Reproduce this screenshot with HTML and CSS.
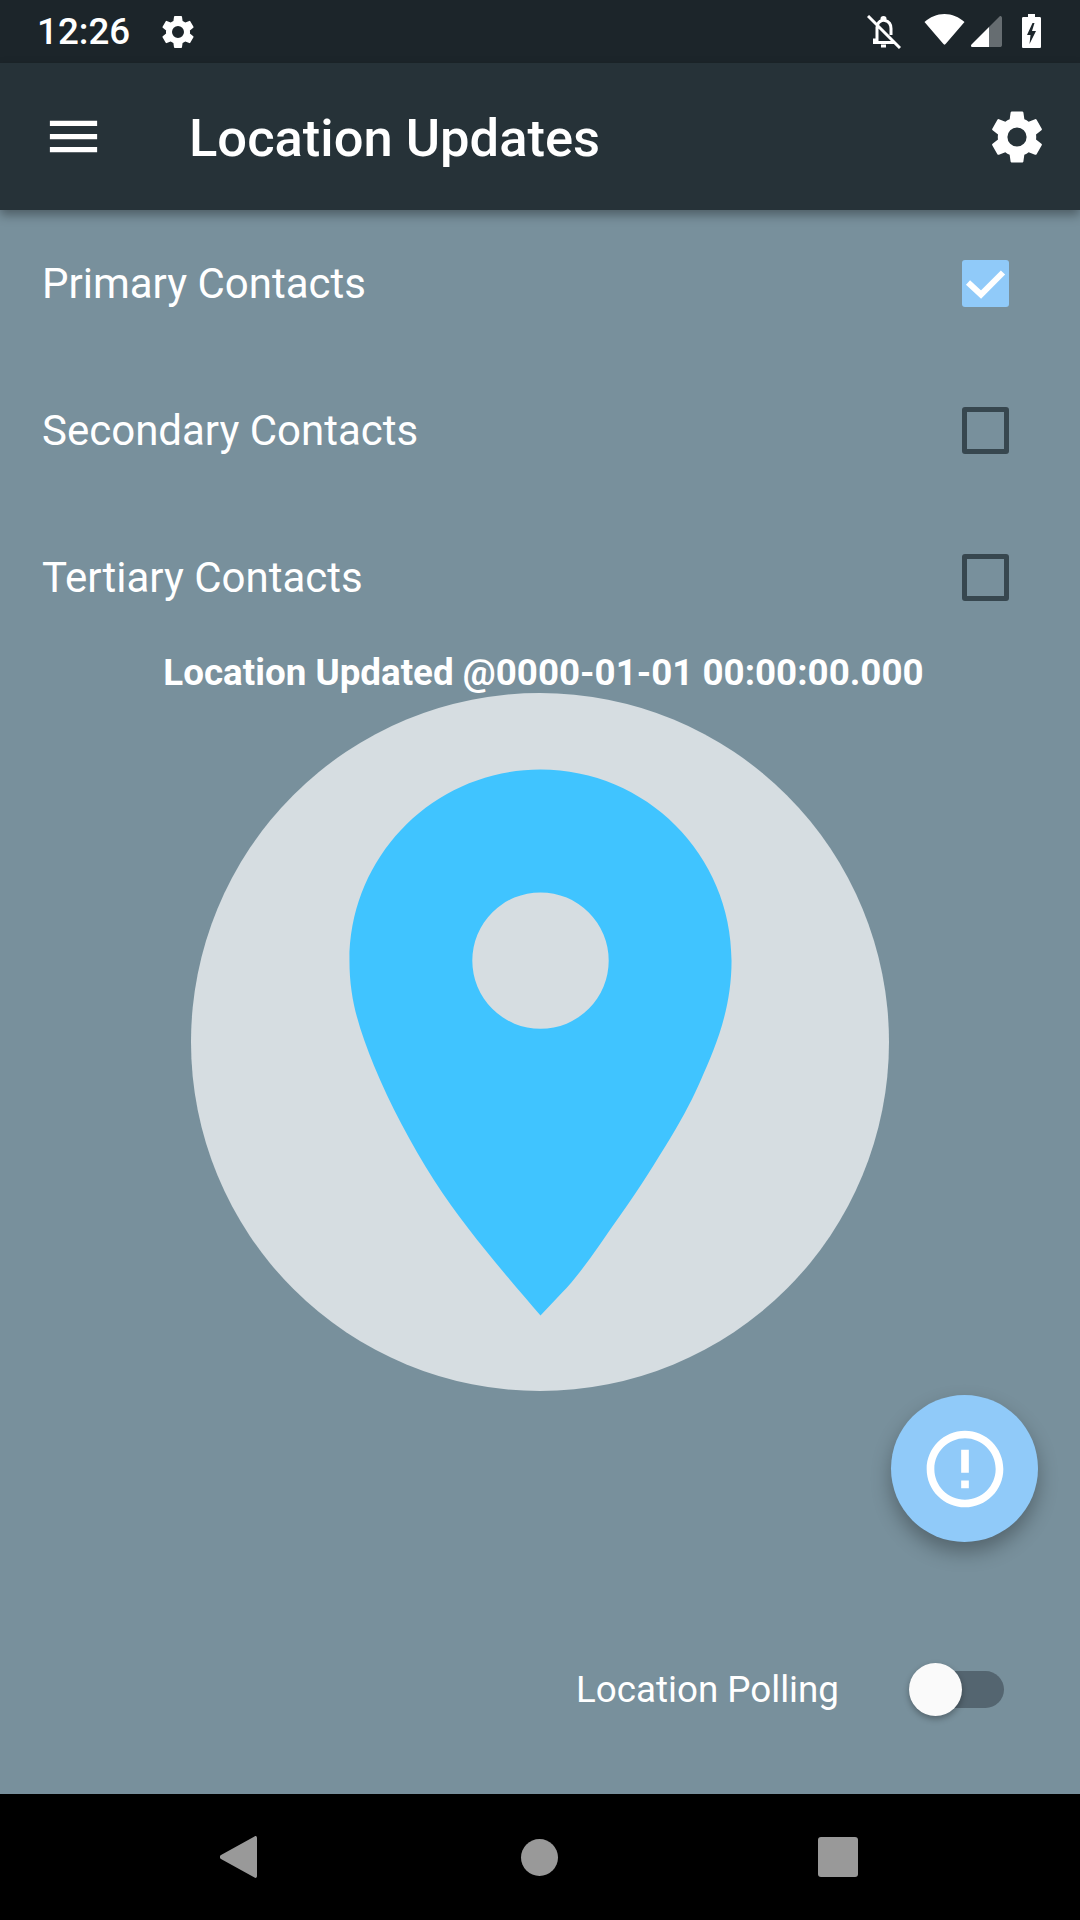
FILE: index.html
```html
<!DOCTYPE html>
<html lang="en">
<head>
  <meta charset="UTF-8">
  <title>Location Updates</title>
  <link rel="stylesheet" href="styles.css">
</head>
<body>
  <div class="status-bar">
    <span class="clock">12:26</span>
    <svg class="status-gear" viewBox="0 0 24 24"><path d="M19.14 12.94c.04-.3.06-.61.06-.94 0-.32-.02-.64-.07-.94l2.03-1.58a.49.49 0 0 0 .12-.61l-1.92-3.32a.49.49 0 0 0-.59-.22l-2.39.96c-.5-.38-1.03-.7-1.62-.94l-.36-2.54a.48.48 0 0 0-.48-.41h-3.84a.48.48 0 0 0-.47.41l-.36 2.54c-.59.24-1.13.57-1.62.94l-2.39-.96a.49.49 0 0 0-.59.22L2.74 8.87a.48.48 0 0 0 .12.61l2.03 1.58c-.05.3-.09.63-.09.94s.02.64.07.94l-2.03 1.58a.49.49 0 0 0-.12.61l1.92 3.32c.12.22.37.29.59.22l2.39-.96c.5.38 1.03.7 1.62.94l.36 2.54c.05.24.24.41.48.41h3.84c.24 0 .44-.17.47-.41l.36-2.54c.59-.24 1.13-.56 1.62-.94l2.39.96c.22.08.47 0 .59-.22l1.92-3.32a.48.48 0 0 0-.12-.61l-2.01-1.58zM12 15.6A3.6 3.6 0 1 1 12 8.4a3.6 3.6 0 0 1 0 7.2z"/></svg>
    <div class="status-icons">
      <svg class="ic-bell" viewBox="0 0 34 34"><path class="bell-line" d="M10 12.500 C10.500 8 13 6 15 5.500 L15 3.500 C15 2 18 2 18 3.500 L18 5.500 C22 6.500 24 9.500 24 13.500 L24 20 M10 12 L10 25 L6 25 M6 27.500 L27 27.500 M14 31 L19 31 M1 1 L33 33"/></svg>
      <svg class="ic-wifi" viewBox="0 0 41 31"><path d="M0.500 8 C6 3 13 0 20.500 0 C28 0 35 3 40.500 8 L22 29.500 C21 31 20 31 19 29.500 Z"/></svg>
      <svg class="ic-signal" viewBox="0 0 31 31"><path class="signal-back" d="M29 0 C30 0 31 0.500 31 2 L31 29 C31 30.500 30 31 29 31 L18 31 L18 11 Z"/><path d="M18 11 L18 31 L1.500 31 C0 31 -0.500 29.500 0.500 28.500 Z"/></svg>
      <svg class="ic-battery" viewBox="0 0 19 34"><path fill-rule="evenodd" d="M6 0 L13 0 L13 3 L17.500 3 C18.500 3 19 3.500 19 4.500 L19 32.500 C19 33.500 18.500 34 17.500 34 L1.500 34 C0.500 34 0 33.500 0 32.500 L0 4.500 C0 3.500 0.500 3 1.500 3 L6 3 Z M10.500 9 L5 21 L8.500 21 L7.500 30 L14 17 L10 17 L12.500 9 Z"/></svg>
    </div>
  </div>

  <header class="app-bar">
    <button class="bar-btn menu-btn">
      <svg viewBox="0 0 24 24"><path d="M3 18h18v-2H3v2zm0-5h18v-2H3v2zm0-7v2h18V6H3z"/></svg>
    </button>
    <h1 class="bar-title">Location Updates</h1>
    <button class="bar-btn settings-btn">
      <svg viewBox="0 0 24 24"><path d="M19.14 12.94c.04-.3.06-.61.06-.94 0-.32-.02-.64-.07-.94l2.03-1.58a.49.49 0 0 0 .12-.61l-1.92-3.32a.49.49 0 0 0-.59-.22l-2.39.96c-.5-.38-1.03-.7-1.62-.94l-.36-2.54a.48.48 0 0 0-.48-.41h-3.84a.48.48 0 0 0-.47.41l-.36 2.54c-.59.24-1.13.57-1.62.94l-2.39-.96a.49.49 0 0 0-.59.22L2.74 8.87a.48.48 0 0 0 .12.61l2.03 1.58c-.05.3-.09.63-.09.94s.02.64.07.94l-2.03 1.58a.49.49 0 0 0-.12.61l1.92 3.32c.12.22.37.29.59.22l2.39-.96c.5.38 1.03.7 1.62.94l.36 2.54c.05.24.24.41.48.41h3.84c.24 0 .44-.17.47-.41l.36-2.54c.59-.24 1.13-.56 1.62-.94l2.39.96c.22.08.47 0 .59-.22l1.92-3.32a.48.48 0 0 0-.12-.61l-2.01-1.58zM12 15.6A3.6 3.6 0 1 1 12 8.4a3.6 3.6 0 0 1 0 7.2z"/></svg>
    </button>
  </header>

  <main class="content">
    <div class="contact-row">
      <span>Primary Contacts</span>
      <span class="checkbox checked">
        <svg viewBox="0 0 47 47"><path d="M6 22.500 L19 34.500 L41 12.500"/></svg>
      </span>
    </div>
    <div class="contact-row">
      <span>Secondary Contacts</span>
      <span class="checkbox"></span>
    </div>
    <div class="contact-row">
      <span>Tertiary Contacts</span>
      <span class="checkbox"></span>
    </div>

    <p class="updated">Location Updated @0000-01-01 00:00:00.000</p>

    <div class="map-circle">
      <svg viewBox="0 0 24 24"><path fill-rule="evenodd" d="M12 2C8.130 2 5 5.130 5 9C5 10.500 5.400 11.600 5.900 12.850C6.500 14.300 7.250 15.700 8.100 17.050C9.300 18.900 10.800 20.600 12 22L12.760 21.200C13.500 20.450 14.200 19.350 14.930 18.320C15.700 17.250 16.200 16.400 16.760 15.500C17.300 14.600 17.600 14 17.860 13.410C18.400 12.200 19 10.800 19 9C19 5.130 15.870 2 12 2zM12 11.500a2.500 2.500 0 0 1 0-5 2.500 2.500 0 0 1 0 5z"/></svg>
    </div>

    <button class="fab">
      <svg viewBox="0 0 24 24"><path d="M11 15h2v2h-2zm0-8h2v6h-2zm.99-5C6.470 2 2 6.480 2 12s4.470 10 9.990 10C17.520 22 22 17.520 22 12S17.520 2 11.990 2zM12 20c-4.420 0-8-3.580-8-8s3.580-8 8-8 8 3.580 8 8-3.580 8-8 8z"/></svg>
    </button>

    <div class="polling-row">
      <span>Location Polling</span>
      <span class="switch"><span class="switch-thumb"></span></span>
    </div>
  </main>

  <nav class="nav-bar">
    <svg class="nav-back" viewBox="0 0 37 42"><path d="M34.500 0.500 C36 -0.500 37 0.500 37 2 L37 40 C37 41.500 36 42.500 34.500 41.500 L1 23 C-0.500 22 -0.500 20 1 19 Z"/></svg>
    <span class="nav-home"></span>
    <span class="nav-recent"></span>
  </nav>
</body>
</html>
```

FILE: styles.css
```css
* {
  box-sizing: border-box;
}

body {
  margin: 0;
  width: 1080px;
  height: 1920px;
  overflow: hidden;
  display: flex;
  flex-direction: column;
  font-family: Roboto, "Liberation Sans", sans-serif;
  color: #fff;
  background-color: #78909c;
}

svg {
  display: block;
  fill: #fff;
}

/* status bar */
.status-bar {
  height: 63px;
  flex-shrink: 0;
  display: flex;
  align-items: center;
  padding-left: 37px;
  background-color: #1c252a;
}

.clock {
  font-size: 36.75px;
  font-weight: 500;
  line-height: 65px;
  width: 121px;
}

.status-gear {
  width: 40px;
  height: 40px;
}

.status-icons {
  margin-left: auto;
  width: 213px;
  height: 63px;
  display: flex;
  align-items: flex-start;
}

.ic-bell {
  width: 34px;
  height: 34px;
  margin-top: 15px;
}

.bell-line {
  fill: none;
  stroke: #fff;
  stroke-width: 3;
}

.ic-wifi {
  width: 41px;
  height: 31px;
  margin: 14px 0 0 23px;
}

.ic-signal {
  width: 31px;
  height: 31px;
  margin: 16px 0 0 6px;
}

.signal-back {
  fill: #666d71;
}

.ic-battery {
  width: 19px;
  height: 34px;
  margin: 14px 0 0 20px;
}

/* app bar */
.app-bar {
  height: 147px;
  flex-shrink: 0;
  display: flex;
  align-items: center;
  background-color: #263238;
  box-shadow: 0 5px 10px rgba(0, 0, 0, 0.35);
  position: relative;
  z-index: 1;
}

.bar-btn {
  border: 0;
  padding: 0;
  background: none;
  display: flex;
  align-items: center;
  justify-content: center;
}

.menu-btn svg {
  width: 63px;
  height: 63px;
}

.settings-btn svg {
  width: 64px;
  height: 64px;
}

.menu-btn {
  width: 147px;
  height: 147px;
}

.settings-btn {
  width: 126px;
  height: 126px;
  margin-left: auto;
}

.bar-title {
  margin: 2px 0 0 42px;
  font-size: 52.5px;
  font-weight: 500;
}

/* main area */
.content {
  flex: 1;
  position: relative;
  display: flex;
  flex-direction: column;
  align-items: center;
}

.contact-row {
  width: 100%;
  height: 147px;
  flex-shrink: 0;
  display: flex;
  align-items: center;
  justify-content: space-between;
  padding: 0 71px 0 42px;
  font-size: 42px;
}

.checkbox {
  width: 47px;
  height: 47px;
  border: 5px solid #37474f;
  border-radius: 3px;
}

.checkbox.checked {
  border: 0;
  background-color: #90caf9;
}

.checkbox svg {
  fill: none;
  stroke: #fff;
  stroke-width: 6;
}

.updated {
  margin: 0 0 0 7px;
  height: 42px;
  font-size: 36.75px;
  font-weight: 700;
  line-height: 44px;
}

.map-circle {
  width: 698px;
  height: 698px;
  border-radius: 50%;
  display: flex;
  align-items: center;
  justify-content: center;
  background-color: #d6dde1;
}

.map-circle svg {
  width: 655px;
  height: 655px;
  fill: #40c4ff;
}

.fab {
  position: absolute;
  right: 42px;
  top: 1185px;
  width: 147px;
  height: 147px;
  border: 0;
  padding: 0;
  border-radius: 50%;
  display: flex;
  align-items: center;
  justify-content: center;
  background-color: #90caf9;
  box-shadow: 0 10px 20px rgba(0, 0, 0, 0.3);
}

.fab svg {
  width: 92px;
  height: 92px;
}

.polling-row {
  margin-top: auto;
  margin-bottom: 84px;
  width: 100%;
  display: flex;
  align-items: center;
  justify-content: flex-end;
  padding-right: 76px;
  font-size: 36.75px;
  height: 42px;
}

.switch {
  position: relative;
  width: 87px;
  height: 37px;
  margin-left: 78px;
  border-radius: 19px;
  background-color: #546570;
}

.switch-thumb {
  position: absolute;
  left: -8px;
  top: -8px;
  width: 53px;
  height: 53px;
  border-radius: 50%;
  background-color: #fafafa;
  box-shadow: 0 3px 6px rgba(0, 0, 0, 0.3);
}

/* nav bar */
.nav-bar {
  height: 126px;
  flex-shrink: 0;
  position: relative;
  display: flex;
  align-items: center;
  background-color: #000;
}

.nav-back {
  width: 37px;
  height: 42px;
  margin-left: 220px;
  fill: #999;
}

.nav-home {
  width: 37px;
  height: 37px;
  margin-left: 264px;
  border-radius: 50%;
  background-color: #999;
}

.nav-recent {
  width: 40px;
  height: 40px;
  margin-left: 260px;
  border-radius: 3px;
  background-color: #999;
}
```
